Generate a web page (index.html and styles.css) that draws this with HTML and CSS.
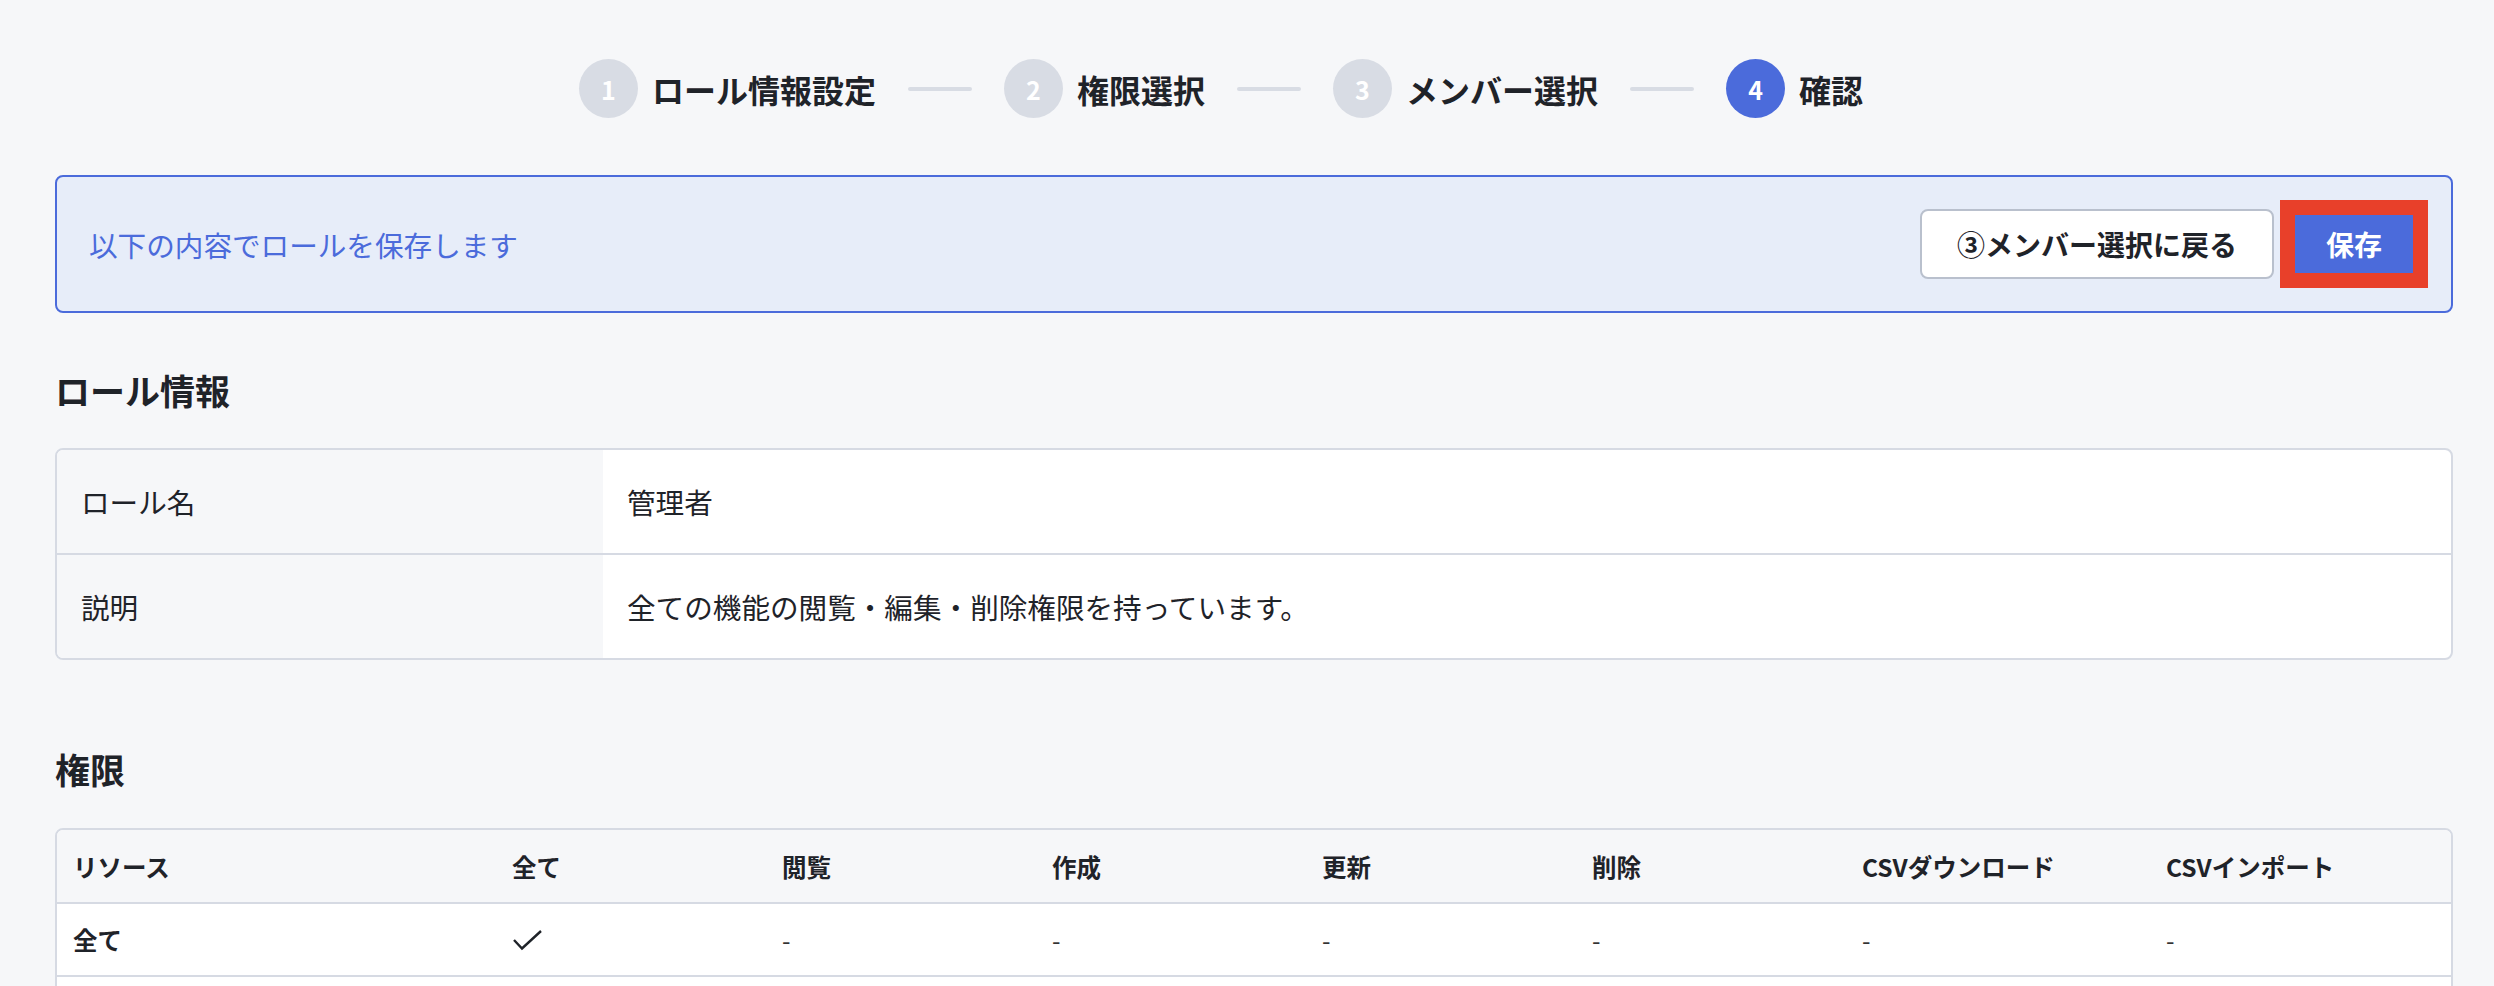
FILE: index.html
```html
<!DOCTYPE html>
<html lang="ja">
  <head>
    <meta charset="UTF-8" />
    <meta name="viewport" content="width=device-width, initial-scale=1.0" />
    <title>ロール作成 - 確認</title>
    <link rel="stylesheet" href="styles.css">
  </head>
  <body>
    <div class="page">
      <ol class="stepper">
        <li class="step">
          <span class="step-num">1</span>
          <span class="step-label">ロール情報設定</span>
        </li>
        <li class="step-line"></li>
        <li class="step">
          <span class="step-num">2</span>
          <span class="step-label">権限選択</span>
        </li>
        <li class="step-line"></li>
        <li class="step">
          <span class="step-num">3</span>
          <span class="step-label">メンバー選択</span>
        </li>
        <li class="step-line"></li>
        <li class="step active">
          <span class="step-num">4</span>
          <span class="step-label">確認</span>
        </li>
      </ol>

      <div class="notice">
        <p class="notice-text">以下の内容でロールを保存します</p>
        <div class="notice-actions">
          <button class="btn btn-outline">③メンバー選択に戻る</button>
          <button class="btn btn-primary">保存</button>
        </div>
      </div>

      <h2 class="section-title">ロール情報</h2>
      <div class="table-box">
        <table class="info-table">
          <tr>
            <th>ロール名</th>
            <td>管理者</td>
          </tr>
          <tr>
            <th>説明</th>
            <td>全ての機能の閲覧・編集・削除権限を持っています。</td>
          </tr>
        </table>
      </div>

      <h2 class="section-title section-gap">権限</h2>
      <div class="table-box">
        <table class="perm-table">
          <colgroup>
            <col class="col-resource" />
            <col class="col-perm" />
            <col class="col-perm" />
            <col class="col-perm" />
            <col class="col-perm" />
            <col class="col-perm" />
            <col class="col-csv" />
            <col />
          </colgroup>
          <thead>
            <tr>
              <th>リソース</th>
              <th>全て</th>
              <th>閲覧</th>
              <th>作成</th>
              <th>更新</th>
              <th>削除</th>
              <th>CSVダウンロード</th>
              <th>CSVインポート</th>
            </tr>
          </thead>
          <tbody>
            <tr>
              <td class="resource">全て</td>
              <td>
                <svg class="check" width="31" height="22" viewBox="0 0 31 22">
                  <polyline points="2,11 10,19.5 29,2" fill="none" stroke="#1f2329" stroke-width="2.4" />
                </svg>
              </td>
              <td>-</td>
              <td>-</td>
              <td>-</td>
              <td>-</td>
              <td>-</td>
              <td>-</td>
            </tr>
            <tr>
              <td class="resource">ユーザー</td>
              <td>-</td>
              <td>-</td>
              <td>-</td>
              <td>-</td>
              <td>-</td>
              <td>-</td>
              <td>-</td>
            </tr>
          </tbody>
        </table>
      </div>
    </div>
  </body>
</html>
```

FILE: styles.css
```css
body,
html {
  margin: 0;
  padding: 0;
  background: #f6f7f9;
  font-family: "Noto Sans CJK JP", "Noto Sans", sans-serif;
  color: #1f2329;
}

.page {
  padding: 59px 41px 0 55px;
}

/* ステッパー */
.stepper {
  display: flex;
  align-items: center;
  justify-content: center;
  gap: 32px;
  list-style: none;
  margin: 0;
  padding: 0 66px 0 0;
}

.step {
  display: flex;
  align-items: center;
  gap: 14px;
}

.step-num {
  display: flex;
  align-items: center;
  justify-content: center;
  width: 59px;
  height: 59px;
  border-radius: 50%;
  background: #d8dce4;
  color: #fff;
  font-size: 25px;
  font-weight: 700;
}

.step.active .step-num {
  background: #4b6bdb;
}

.step-label {
  font-size: 32px;
  font-weight: 700;
  line-height: 1;
}

.step-line {
  width: 64px;
  height: 4px;
  border-radius: 2px;
  background: #d8dce4;
}

/* 確認バナー */
.notice {
  display: flex;
  align-items: center;
  justify-content: space-between;
  box-sizing: border-box;
  height: 138px;
  margin-top: 57px;
  padding: 0 38px 0 32px;
  border: 2px solid #4b6bdb;
  border-radius: 8px;
  background: #e7edf9;
}

.notice-text {
  margin: 0;
  color: #4b6bdb;
  font-size: 28.6px;
}

.notice-actions {
  display: flex;
  align-items: center;
  gap: 21px;
}

.btn {
  font-family: inherit;
  font-size: 28px;
  font-weight: 700;
  line-height: 1;
  cursor: pointer;
}

.btn-outline {
  height: 70px;
  padding: 0 35px;
  border: 2px solid #b9c0cd;
  border-radius: 8px;
  background: #fff;
  color: #1f2329;
}

.btn-primary {
  height: 58px;
  padding: 0 31px;
  border: none;
  border-radius: 0;
  background: #4b6bdb;
  color: #fff;
  outline: 15px solid #e8402a;
}

/* セクション */
.section-title {
  margin: 59px 0 40px;
  font-size: 35px;
  font-weight: 700;
  line-height: 36px;
}

.section-gap {
  margin-top: 91px;
  margin-bottom: 41px;
}

.table-box {
  border: 2px solid #d6dae3;
  border-radius: 8px;
  overflow: hidden;
  background: #fff;
}

table {
  width: 100%;
  border-collapse: collapse;
}

.info-table th,
.info-table td {
  height: 103px;
  padding: 0 24px;
  font-size: 28.6px;
  font-weight: 400;
  text-align: left;
  vertical-align: middle;
}

.info-table th {
  width: 498px;
  background: #f6f7f9;
}

.info-table tr + tr th,
.info-table tr + tr td {
  border-top: 2px solid #d6dae3;
}

.perm-table {
  table-layout: fixed;
}

.col-resource {
  width: 439px;
}

.col-perm {
  width: 270px;
}

.col-csv {
  width: 304px;
}

.perm-table th,
.perm-table td {
  padding: 0 16px;
  font-size: 24.5px;
  text-align: left;
  vertical-align: middle;
  white-space: nowrap;
}

.perm-table th {
  height: 72px;
  background: #f6f7f9;
  font-weight: 700;
  border-bottom: 2px solid #d6dae3;
}

.perm-table td {
  height: 71px;
  font-weight: 400;
  color: #333;
}

.perm-table tbody tr + tr td {
  border-top: 2px solid #d6dae3;
}

.perm-table td.resource {
  font-weight: 700;
  color: #1f2329;
}

.check {
  display: block;
}
```
